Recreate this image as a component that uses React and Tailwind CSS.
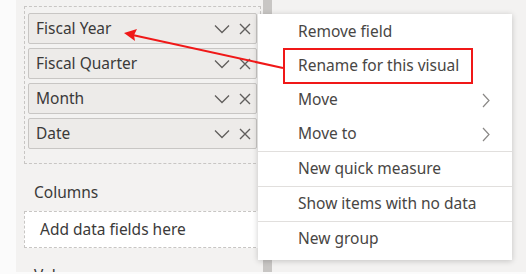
import React from "react";

const fields = ["Fiscal Year", "Fiscal Quarter", "Month", "Date"];

const Chevron = () => (
  <svg width="16" height="10" viewBox="0 0 16 10" fill="none" stroke="#605e5c" strokeWidth="1.3">
    <path d="M1 1.5 L8 8.5 L15 1.5" />
  </svg>
);

const Close = () => (
  <svg width="12" height="12" viewBox="0 0 12 12" fill="none" stroke="#605e5c" strokeWidth="1.4">
    <path d="M1 1 L11 11 M11 1 L1 11" />
  </svg>
);

const RightChevron = () => (
  <svg width="8" height="15" viewBox="0 0 8 15" fill="none" stroke="#8a8886" strokeWidth="1.2">
    <path d="M1 1 L7 7.5 L1 14" />
  </svg>
);

const FieldPill = ({ name }) => (
  <div className="flex h-[31px] shrink-0 items-center rounded-[2px] border border-[#c8c6c4] bg-[#edebe9] pl-[7px] pr-[5px]">
    <span className="flex-1 text-[15.5px] text-[#3b3a39]">{name}</span>
    <div className="flex items-center gap-[9px]">
      <Chevron />
      <Close />
    </div>
  </div>
);

const MenuItem = ({ label, sub, divider, tall }) => (
  <div
    className={`flex shrink-0 items-center pl-[40px] pr-[22px] ${tall ? "h-[35px]" : "h-[34px]"} ${
      divider ? "border-t border-[#e1dfdd]" : ""
    }`}
  >
    <span className="flex-1 text-[15.5px] text-[#484644]">{label}</span>
    {sub && <RightChevron />}
  </div>
);

export default function App() {
  return (
    <div
      className="relative flex h-[274px] w-[526px] overflow-hidden bg-[#f3f2f1]"
      style={{ fontFamily: '"Noto Sans", "Open Sans", Arial, sans-serif' }}
    >
      <div className="w-[16px] shrink-0 bg-[#fbfbfb]" />

      {/* field well panel */}
      <div className="flex w-[247px] shrink-0 flex-col pl-[8px] pr-[2px] pt-[6px]">
        <div className="flex shrink-0 flex-col gap-[4px] border border-dashed border-[#c8c6c4] px-[3px] pb-[14px] pt-[6px]">
          {fields.map((f) => (
            <FieldPill key={f} name={f} />
          ))}
        </div>
        <div className="flex h-[47px] shrink-0 items-center pl-[10px] pt-[10px] text-[15.5px] text-[#3b3a39]">Columns</div>
        <div className="flex h-[37px] shrink-0 items-center border border-dashed border-[#c8c6c4] bg-white pl-[15px] text-[15.5px] text-[#3b3a39]">
          Add data fields here
        </div>
        <div className="shrink-0 pl-[10px] pt-[16px] text-[15.5px] text-[#3b3a39]">Values</div>
      </div>

      <div className="w-[9px] shrink-0 bg-[#c8c6c4]" />
      <div className="flex-1" />

      {/* context menu */}
      <div className="absolute left-[258px] top-[14px] flex h-[246px] w-[254px] flex-col bg-white pt-[1px] shadow-[0_1px_6px_rgba(0,0,0,0.2)]">
        <MenuItem label="Remove field" />
        <MenuItem label="Rename for this visual" />
        <MenuItem label="Move" sub />
        <MenuItem label="Move to" sub />
        <MenuItem label="New quick measure" divider tall />
        <MenuItem label="Show items with no data" divider tall />
        <MenuItem label="New group" divider tall />
      </div>

      {/* annotation */}
      <div className="absolute left-[283px] top-[48px] h-[36px] w-[190px] border-2 border-[#f01818]" />
      <svg className="absolute left-0 top-0" width="526" height="274" viewBox="0 0 526 274">
        <path d="M283 68 L128 34" stroke="#f01818" strokeWidth="2" fill="none" />
        <path d="M124 33 L137 29 L134 35 L135 41 Z" fill="#f01818" />
      </svg>
      <div className="absolute bottom-0 left-0 h-[2px] w-[526px] bg-[#fbfbfb]" />
    </div>
  );
}
